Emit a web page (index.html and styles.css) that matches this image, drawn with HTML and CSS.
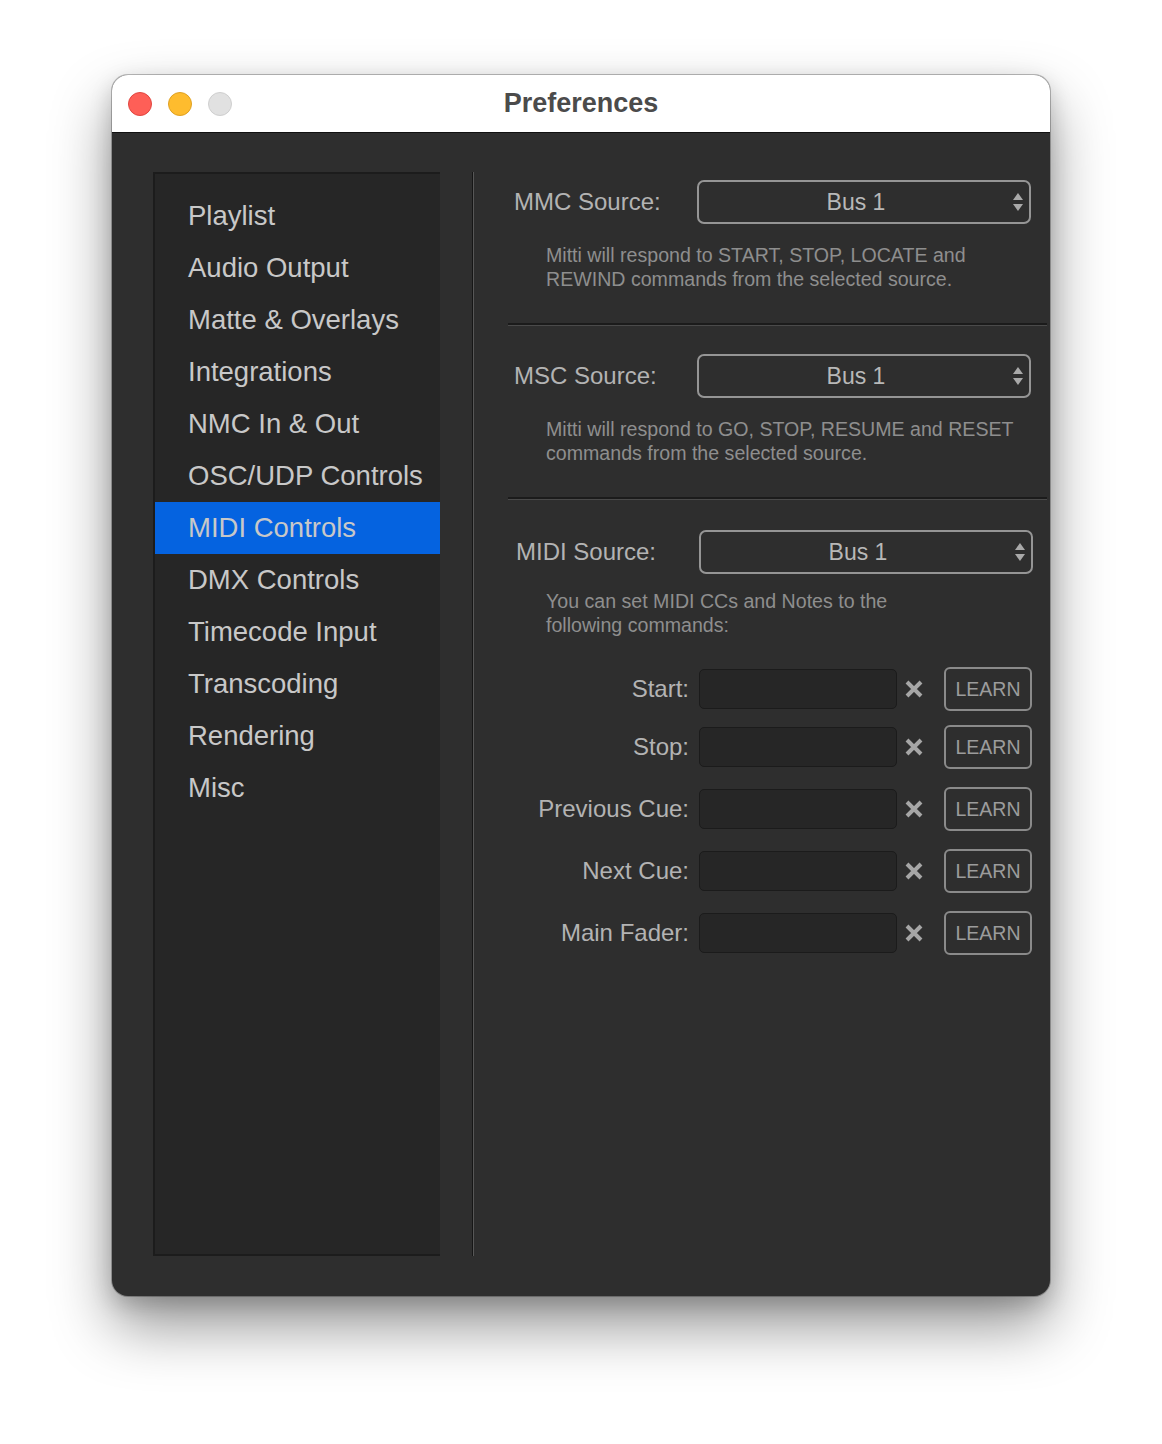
FILE: index.html
```html
<!DOCTYPE html>
<html lang="en">
<head>
  <meta charset="UTF-8" />
  <meta name="viewport" content="width=device-width, initial-scale=1.0"/>
  <title>Preferences</title>
  <link rel="stylesheet" href="styles.css">
</head>
<body>
  <div class="window">
    <header class="titlebar">
      <div class="lights">
        <span class="light red"></span>
        <span class="light yellow"></span>
        <span class="light off"></span>
      </div>
      <h1>Preferences</h1>
      <div></div>
    </header>

    <div class="main">
      <ul class="sidebar">
        <li>Playlist</li>
        <li>Audio Output</li>
        <li>Matte &amp; Overlays</li>
        <li>Integrations</li>
        <li>NMC In &amp; Out</li>
        <li>OSC/UDP Controls</li>
        <li class="active">MIDI Controls</li>
        <li>DMX Controls</li>
        <li>Timecode Input</li>
        <li>Transcoding</li>
        <li>Rendering</li>
        <li>Misc</li>
      </ul>

      <div class="divider"></div>

      <div class="panel">
        <section class="src first">
          <div class="src-row">
            <label>MMC Source:</label>
            <div class="select">
              <span>Bus 1</span>
              <svg width="10" height="18" viewBox="0 0 10 18"><polygon points="0,7 5,0 10,7" /><polygon points="0,11 5,18 10,11" /></svg>
            </div>
          </div>
          <p class="note">Mitti will respond to START, STOP, LOCATE and<br>REWIND commands from the selected source.</p>
        </section>

        <section class="src second">
          <div class="src-row">
            <label>MSC Source:</label>
            <div class="select">
              <span>Bus 1</span>
              <svg width="10" height="18" viewBox="0 0 10 18"><polygon points="0,7 5,0 10,7" /><polygon points="0,11 5,18 10,11" /></svg>
            </div>
          </div>
          <p class="note">Mitti will respond to GO, STOP, RESUME and RESET<br>commands from the selected source.</p>
        </section>

        <section class="src midi">
          <div class="src-row">
            <label>MIDI Source:</label>
            <div class="select">
              <span>Bus 1</span>
              <svg width="10" height="18" viewBox="0 0 10 18"><polygon points="0,7 5,0 10,7" /><polygon points="0,11 5,18 10,11" /></svg>
            </div>
          </div>
          <p class="note">You can set MIDI CCs and Notes to the<br>following commands:</p>

          <div class="cmds">
            <div class="cmd">
              <label>Start:</label>
              <div class="field"></div>
              <svg class="clear" width="18" height="18" viewBox="0 0 18 18"><path d="M2 2 L16 16 M16 2 L2 16" /></svg>
              <button class="learn">LEARN</button>
            </div>
            <div class="cmd">
              <label>Stop:</label>
              <div class="field"></div>
              <svg class="clear" width="18" height="18" viewBox="0 0 18 18"><path d="M2 2 L16 16 M16 2 L2 16" /></svg>
              <button class="learn">LEARN</button>
            </div>
            <div class="cmd">
              <label>Previous Cue:</label>
              <div class="field"></div>
              <svg class="clear" width="18" height="18" viewBox="0 0 18 18"><path d="M2 2 L16 16 M16 2 L2 16" /></svg>
              <button class="learn">LEARN</button>
            </div>
            <div class="cmd">
              <label>Next Cue:</label>
              <div class="field"></div>
              <svg class="clear" width="18" height="18" viewBox="0 0 18 18"><path d="M2 2 L16 16 M16 2 L2 16" /></svg>
              <button class="learn">LEARN</button>
            </div>
            <div class="cmd">
              <label>Main Fader:</label>
              <div class="field"></div>
              <svg class="clear" width="18" height="18" viewBox="0 0 18 18"><path d="M2 2 L16 16 M16 2 L2 16" /></svg>
              <button class="learn">LEARN</button>
            </div>
          </div>
        </section>
      </div>
    </div>
  </div>
</body>
</html>
```

FILE: styles.css
```css
html {
  background: #fff;
}
body {
  margin: 0;
  padding: 75px 0 148px 112px;
  font-family: 'Liberation Sans', Arial, sans-serif;
}
.window {
  width: 938px;
  height: 1221px;
  display: flex;
  flex-direction: column;
  border-radius: 16px;
  overflow: hidden;
  background: #2e2e2e;
  box-shadow: 0 0 0 1px rgba(0,0,0,0.25), 0 30px 60px rgba(0,0,0,0.42), 0 8px 22px rgba(0,0,0,0.18);
}
.titlebar {
  height: 57px;
  flex: none;
  background: #fff;
  border-bottom: 1px solid #111;
  display: grid;
  grid-template-columns: 1fr auto 1fr;
  align-items: center;
}
.lights {
  display: flex;
  gap: 16px;
  padding-left: 16px;
}
.light {
  width: 24px;
  height: 24px;
  border-radius: 50%;
  box-sizing: border-box;
}
.light.red { background: #fe5f57; border: 1px solid #e14640; }
.light.yellow { background: #febc2e; border: 1px solid #dfa123; }
.light.off { background: #e1e1e1; border: 1px solid #cfcfcf; }
.titlebar h1 {
  margin: 0;
  font-size: 27px;
  font-weight: bold;
  color: #4b4b4b;
}
.main {
  flex: 1;
  display: flex;
  padding: 39px 0 40px 41px;
}
.sidebar {
  list-style: none;
  margin: 0;
  padding: 16px 0 0;
  width: 287px;
  box-sizing: border-box;
  background: #262626;
  border: 2px solid #1c1c1c;
  border-right: none;
}
.sidebar li {
  height: 52px;
  line-height: 52px;
  padding-left: 33px;
  font-size: 27.5px;
  color: #c8c8c8;
}
.sidebar li.active {
  background: #0563e0;
}
.divider {
  width: 1px;
  margin-left: 32px;
  background: #575757;
  border-left: 1px solid #161616;
}
.panel {
  flex: 1;
}
.src {
  margin: 0 3px 0 34px;
  padding-bottom: 32px;
  border-bottom: 2px solid #1b1b1b;
  box-shadow: 0 1px 0 #4a4a4a;
}
.src.first { padding-top: 8px; }
.src.second { padding-top: 29px; }
.src.midi {
  padding-top: 31px;
  border-bottom: none;
  box-shadow: none;
}
.src-row {
  display: flex;
  align-items: center;
  justify-content: space-between;
  padding: 0 16px 0 6px;
}
.src.midi .src-row {
  padding: 0 14px 0 8px;
}
.src-row label {
  font-size: 24px;
  color: #b3b3b3;
}
.select {
  width: 334px;
  height: 44px;
  box-sizing: border-box;
  border: 2px solid #959595;
  border-radius: 7px;
  display: flex;
  align-items: center;
  padding-right: 6px;
}
.select span {
  flex: 1;
  text-align: center;
  font-size: 23px;
  color: #b8b8b8;
}
.select svg {
  fill: #a9a9a9;
}
.note {
  margin: 19px 0 0;
  padding-left: 38px;
  font-size: 19.6px;
  line-height: 24px;
  color: #8e8e8e;
  white-space: nowrap;
}
.src.midi .note {
  margin-top: 15px;
}
.cmds {
  margin-top: 30px;
  padding-right: 15px;
}
.cmd {
  display: flex;
  align-items: center;
  height: 44px;
}
.cmd + .cmd { margin-top: 18px; }
.cmd:nth-child(2) { margin-top: 14px; }
.cmd label {
  flex: 1;
  text-align: right;
  font-size: 24px;
  color: #b3b3b3;
}
.field {
  width: 198px;
  height: 40px;
  box-sizing: border-box;
  margin-left: 10px;
  background: #262626;
  border: 1px solid #1b1b1b;
  border-radius: 5px;
}
.clear {
  margin-left: 8px;
  stroke: #a6a6a6;
  stroke-width: 4;
}
.learn {
  width: 88px;
  height: 44px;
  margin-left: 21px;
  box-sizing: border-box;
  background: transparent;
  border: 2px solid #8a8a8a;
  border-radius: 6px;
  font-family: 'Liberation Sans', Arial, sans-serif;
  font-size: 19.5px;
  color: #9c9c9c;
  padding: 0;
}
```
